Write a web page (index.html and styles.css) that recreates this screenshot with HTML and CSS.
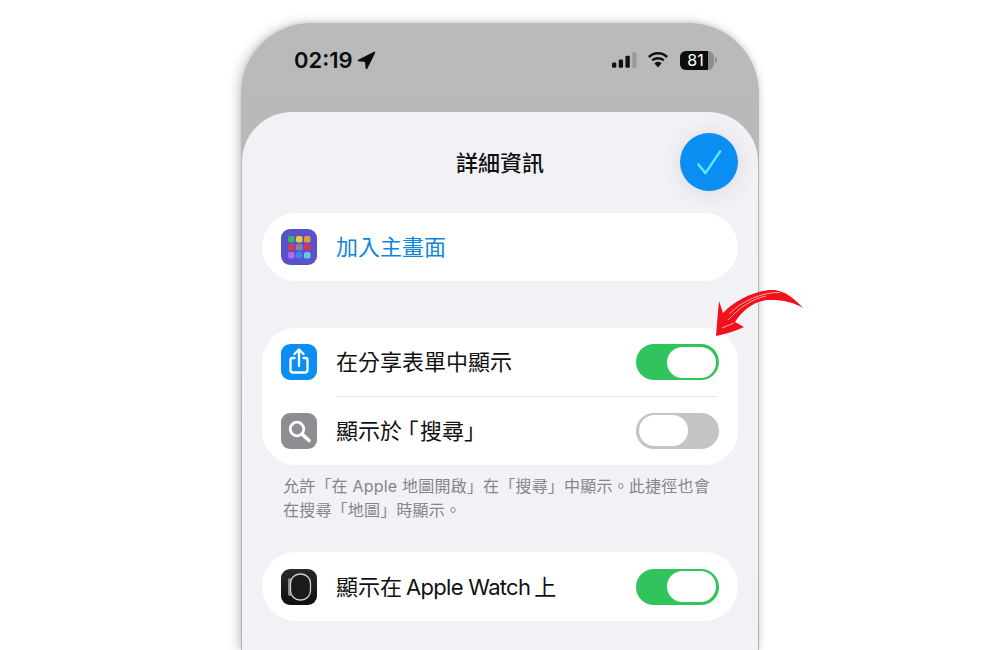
FILE: index.html
```html
<!DOCTYPE html>
<html lang="zh-Hant">
<head>
<meta charset="utf-8">
<title>詳細資訊</title>
<link rel="stylesheet" href="styles.css">
</head>
<body>
<div class="phone">
  <div class="status">
    <div class="status-left">
      <span class="time">02:19</span>
      <svg class="loc" viewBox="0 0 18 18"><path d="M16.500 1.500 L1.500 9 L8.300 9.700 L9 16.500 Z" fill="#0c0c0c" stroke="#0c0c0c" stroke-width="1.600" stroke-linejoin="round"/></svg>
    </div>
    <div class="status-right">
      <svg class="signal" viewBox="0 0 26 16"><rect x="0" y="10.500" width="4.500" height="5.500" rx="1.300" fill="#111"/><rect x="7" y="7.500" width="4.500" height="8.500" rx="1.300" fill="#111"/><rect x="14" y="3.500" width="4.500" height="12.500" rx="1.300" fill="#111"/><rect x="21" y="0" width="4.500" height="16" rx="1.300" fill="#999b9b"/></svg>
      <svg class="wifi" viewBox="0 0 22 16"><path d="M11 2.600C14.200 2.600 17.100 3.800 19.300 5.900L21 4.100C18.400 1.600 14.900 0 11 0S3.600 1.600 1 4.100L2.700 5.900C4.900 3.800 7.800 2.600 11 2.600Z" fill="#111"/><path d="M11 7.400C12.900 7.400 14.600 8.100 15.900 9.300L17.600 7.500C15.900 5.900 13.600 4.900 11 4.900S6.100 5.900 4.400 7.500L6.100 9.300C7.400 8.100 9.100 7.400 11 7.400Z" fill="#111"/><path d="M11 9.700C9.600 9.700 8.300 10.300 7.300 11.200L11 15.500L14.700 11.200C13.700 10.300 12.400 9.700 11 9.700Z" fill="#111"/></svg>
      <div class="battery">
        <div class="batt-body"><span class="batt-fill">81</span></div>
        <span class="batt-tip"></span>
      </div>
    </div>
  </div>

  <div class="sheet">
    <header class="sheet-head">
      <h1 class="title">詳細資訊</h1>
      <button class="done" aria-label="完成">
        <svg viewBox="0 0 28 28"><path d="M2.500 16 L9.800 25 L25 2.500" fill="none" stroke="#5fe6ff" stroke-width="2.600" stroke-linecap="round" stroke-linejoin="round"/></svg>
      </button>
    </header>

    <section class="card">
      <div class="row">
        <span class="icon icon-home">
          <svg viewBox="0 0 36 36">
            <rect x="7" y="7" width="6.500" height="6.500" rx="1.800" fill="#34b56a"/><rect x="15" y="7" width="6.500" height="6.500" rx="1.800" fill="#edc93a"/><rect x="23" y="7" width="6.500" height="6.500" rx="1.800" fill="#e69b35"/>
            <rect x="7" y="15" width="6.500" height="6.500" rx="1.800" fill="#dc3a50"/><rect x="15" y="15" width="6.500" height="6.500" rx="1.800" fill="#8585a0"/><rect x="23" y="15" width="6.500" height="6.500" rx="1.800" fill="#d8305e"/>
            <rect x="7" y="23" width="6.500" height="6.500" rx="1.800" fill="#b06cf0"/><rect x="15" y="23" width="6.500" height="6.500" rx="1.800" fill="#3a86f5"/><rect x="23" y="23" width="6.500" height="6.500" rx="1.800" fill="#5ccdeb"/>
          </svg>
        </span>
        <span class="label label-link">加入主畫面</span>
      </div>
    </section>

    <section class="card card-group">
      <div class="row">
        <span class="icon icon-share">
          <svg viewBox="0 0 36 36"><g fill="none" stroke="#fff" stroke-width="2.300" stroke-linecap="round" stroke-linejoin="round"><path d="M13.500 14H11.500Q9.500 14 9.500 16V26Q9.500 28.500 12 28.500H24Q26.500 28.500 26.500 26V16Q26.500 14 24.500 14H22.500"/><path d="M18 22V6"/><path d="M13.500 10L18 5.500L22.500 10"/></g></svg>
        </span>
        <span class="label">在分享表單中顯示</span>
        <span class="switch switch-on"><span class="knob"></span></span>
      </div>
      <div class="divider"></div>
      <div class="row">
        <span class="icon icon-search">
          <svg viewBox="0 0 36 36"><g fill="none" stroke="#fff" stroke-linecap="round"><circle cx="16" cy="16" r="6.800" stroke-width="2.800"/><path d="M21.500 21.500L28 27.500" stroke-width="3.600"/></g></svg>
        </span>
        <span class="label">顯示於<span class="bracket">「</span>搜尋」</span>
        <span class="switch switch-off"><span class="knob"></span></span>
      </div>
    </section>

    <p class="note">允許「在 Apple 地圖開啟」在「搜尋」中顯示。此捷徑也會<br>在搜尋「地圖」時顯示。</p>

    <section class="card card-watch">
      <div class="row">
        <span class="icon icon-watch">
          <svg viewBox="0 0 36 36"><rect x="7" y="9" width="4" height="18" rx="2" fill="#8b8b8b"/><rect x="9.500" y="5" width="20" height="26" rx="9.500" fill="#1a1a1a" stroke="#d0d0d0" stroke-width="1.300"/></svg>
        </span>
        <span class="label">顯示在<span class="latin">Apple Watch</span>上</span>
        <span class="switch switch-on"><span class="knob"></span></span>
      </div>
    </section>
  </div>
</div>

<svg class="arrow" viewBox="0 0 100 60" aria-hidden="true">
  <path d="M89 27 C80 17 70 9 58 9 C44 9 22 18 9 32 L5 20 C4 30 3 42 2 55 C12 53 22 50 30 46 L21 41 C28 30 38 22 50 19.500 C62 18 78 20 89 27Z" fill="#f0121b"/>
  <path d="M66 11.500 C48 11 28 20 15 33 M52 15 C38 18 26 26 14 39 M8 47 L20 42" fill="none" stroke="#f9a8a8" stroke-width="1"/>
</svg>
</body>
</html>
```

FILE: styles.css
```css
* { box-sizing: border-box; }
html, body { margin: 0; height: 650px; overflow: hidden; background: #fff; }
body {
  position: relative;
  padding: 23px 0 0 241px;
  font-family: "Inter", "Noto Sans CJK TC", sans-serif;
  color: #111;
}
.phone {
  width: 518px;
  height: 627px;
  border-radius: 70px 70px 0 0;
  background: linear-gradient(#b9bbbb, #b3b5b5);
  box-shadow: -3px 0 12px rgba(0, 0, 0, .2), 1px 0 6px rgba(0, 0, 0, .07), 0 -1px 3px rgba(0, 0, 0, .05);
  display: flex;
  flex-direction: column;
}
.status {
  height: 89px;
  flex: none;
  display: flex;
  justify-content: space-between;
  align-items: flex-start;
  padding: 23px 42px 0 53px;
}
.status-left { display: flex; align-items: center; gap: 4px; height: 28px; }
.time { font-size: 22px; font-weight: 600; line-height: 28px; color: #0c0c0c; }
.loc { width: 19px; height: 19px; }
.status-right { display: flex; align-items: center; height: 28px; }
.signal { width: 25px; height: 16px; margin-right: 10px; }
.wifi { width: 22px; height: 16px; margin-right: 11px; }
.battery { display: flex; align-items: center; }
.batt-body {
  width: 34px;
  height: 19px;
  border-radius: 6px;
  background: #8d8f8f;
  overflow: hidden;
}
.batt-fill {
  display: block;
  width: 28px;
  height: 19px;
  background: #0c0c0c;
  color: #fff;
  font-size: 16px;
  font-weight: 400;
  line-height: 19px;
  text-align: center;
  padding-left: 3px;
}
.batt-tip { width: 2px; height: 6px; background: #8d8f8f; border-radius: 0 2px 2px 0; margin-left: 1px; }

.sheet {
  flex: 1;
  margin: 0 1px;
  padding: 0 20px;
  border-radius: 50px 50px 0 0;
  background: #f1f1f6;
}
.sheet-head {
  position: relative;
  height: 101px;
  display: flex;
  justify-content: center;
  padding-top: 36px;
}
.title { margin: 0; font-size: 22px; font-weight: 500; line-height: 30px; color: #111; }
.done {
  position: absolute;
  top: 21px;
  right: 0;
  width: 58px;
  height: 58px;
  padding: 0;
  border: 0;
  border-radius: 50%;
  background: #0a8ef2;
  box-shadow: 0 2px 22px rgba(0, 0, 0, .1);
  display: flex;
  align-items: center;
  justify-content: center;
}
.done svg { width: 27px; height: 27px; }

.card { background: #fff; border-radius: 34px; }
.card-group { margin-top: 47px; }
.card-watch { margin-top: 30px; }
.row { height: 68px; display: flex; align-items: center; padding: 0 19px; }
.card-group .row { height: 68.500px; }
.card-watch .row { height: 69px; }
.icon {
  width: 36px;
  height: 36px;
  border-radius: 9px;
  flex: none;
  margin-right: 19px;
  display: block;
}
.icon svg { display: block; width: 36px; height: 36px; }
.icon-home { background: #5a52c9; }
.icon-share { background: #0b8ff5; }
.icon-search { background: #8e8e92; }
.icon-watch { background: linear-gradient(#2a2a2a, #0f0f0f); }
.label { flex: 1; font-size: 22px; line-height: 30px; color: #111; white-space: nowrap; }
.label-link { color: #0f86dc; }
.bracket { font-feature-settings: "palt"; margin: 0 2px 0 5px; }
.latin { margin: 0 4px; letter-spacing: -.7px; }
.divider { height: 1px; margin: -0.500px 21px -0.500px 74px; background: #e5e5ea; }

.switch {
  width: 83px;
  height: 36px;
  flex: none;
  border-radius: 18px;
  padding: 2.500px 3px;
  display: flex;
}
.knob { width: 49px; height: 31px; border-radius: 16px; background: #fff; }
.switch-on { background: #32c45c; justify-content: flex-end; }
.switch-off { background: #c4c4c6; justify-content: flex-start; }

.note {
  margin: 9px 0 0;
  padding-left: 21px;
  font-size: 16px;
  letter-spacing: .2px;
  line-height: 24px;
  color: #85858a;
  white-space: nowrap;
}

.arrow {
  position: absolute;
  left: 714px;
  top: 281px;
  width: 100px;
  height: 60px;
}
```
